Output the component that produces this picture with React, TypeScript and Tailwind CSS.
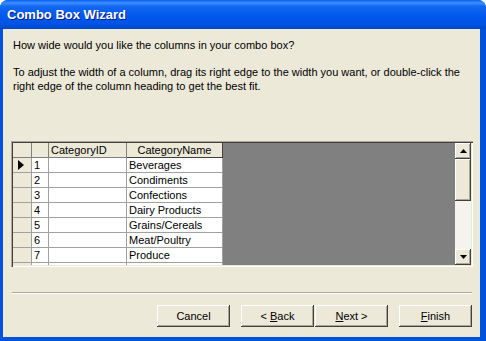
import React from 'react';

const ui = { fontFamily: '"Liberation Sans", Arial, sans-serif' };

const rows = [
  { id: '1', name: 'Beverages' },
  { id: '2', name: 'Condiments' },
  { id: '3', name: 'Confections' },
  { id: '4', name: 'Dairy Products' },
  { id: '5', name: 'Grains/Cereals' },
  { id: '6', name: 'Meat/Poultry' },
  { id: '7', name: 'Produce' },
  { id: '8', name: 'Seafood' },
];

const raised =
  'bg-[#ECE9D8] shadow-[inset_-1px_-1px_#404040,inset_1px_1px_#ffffff,inset_-2px_-2px_#ACA899]';

const WizButton = ({ children, className = '' }: { children: React.ReactNode; className?: string }) => (
  <button className={`w-[73px] h-[22px] flex items-center justify-center text-[11px] text-black ${raised} ${className}`}>
    {children}
  </button>
);

const Triangle = ({ up }: { up?: boolean }) => (
  <svg width="7" height="4" viewBox="0 0 7 4">
    {up ? <polygon points="3.5,0 7,4 0,4" fill="#000" /> : <polygon points="0,0 7,0 3.5,4" fill="#000" />}
  </svg>
);

export default function App() {
  return (
    <div className="w-[486px] h-[341px] flex flex-col rounded-t-[8px] overflow-hidden bg-[#0052DD]" style={ui}>
      {/* title bar */}
      <div className="h-[29px] flex items-center pl-[7px] bg-[linear-gradient(to_bottom,#0A5FEF_0%,#3C8EFF_10%,#1468F0_22%,#0058EE_55%,#0053E1_85%,#0046C4_100%)]">
        <span className="text-white font-bold text-[13px] [text-shadow:1px_1px_#0A1E8C]">Combo Box Wizard</span>
      </div>

      {/* body */}
      <div className="flex-1 ml-[3px] mr-[6px] mb-[4px] bg-[#ECE9D8] flex flex-col text-[11px] text-black">
        <p className="mt-[9px] ml-[10px] leading-[14px]">How wide would you like the columns in your combo box?</p>
        <p className="mt-[13px] ml-[10px] leading-[14px] w-[460px]">
          To adjust the width of a column, drag its right edge to the width you want, or double-click the right edge of the column heading to get the best fit.
        </p>

        {/* datasheet */}
        <div className="mt-[48px] ml-[8px] w-[462px] h-[126px] p-[2px] bg-[#ECE9D8] shadow-[inset_1px_1px_#ACA899,inset_2px_2px_#404040,inset_-1px_-1px_#ffffff,inset_-2px_-2px_#ECE9D8] flex">
          <div className="flex-1 bg-[#808080] overflow-hidden">
            <div className="flex flex-col w-[210px]">
              <div className="flex h-[15px]">
                <div className="w-[19px] bg-[#ECE9D8] border-r border-b border-[#808080]" />
                <div className="w-[17px] bg-[#ECE9D8] border-r border-b border-[#808080]" />
                <div className="w-[78px] bg-[#ECE9D8] border-r border-b border-[#808080] leading-[14px] pl-[2px]">CategoryID</div>
                <div className="w-[96px] bg-[#ECE9D8] border-r border-b border-[#404040] leading-[14px] text-center">CategoryName</div>
              </div>
              {rows.map((r, i) => (
                <div key={r.id} className="flex h-[15px]">
                  <div className="w-[19px] bg-[#ECE9D8] border-r border-b border-[#A0A0A0] flex items-center pl-[5px]">
                    {i === 0 && (
                      <svg width="6" height="10" viewBox="0 0 6 10">
                        <polygon points="0,0 6,5 0,10" fill="#000" />
                      </svg>
                    )}
                  </div>
                  <div className="w-[17px] bg-white border-r border-b border-[#A0A0A0] leading-[14px] pl-[2px]">{r.id}</div>
                  <div className="w-[78px] bg-white border-r border-b border-[#A0A0A0]" />
                  <div className="w-[96px] bg-white border-r border-b border-[#A0A0A0] leading-[14px] pl-[2px]">{r.name}</div>
                </div>
              ))}
            </div>
          </div>

          {/* scrollbar */}
          <div className="w-[16px] flex flex-col bg-[#F4F3EE]">
            <div className={`h-[16px] flex items-center justify-center ${raised}`}>
              <Triangle up />
            </div>
            <div className={`h-[42px] ${raised}`} />
            <div className="flex-1" />
            <div className={`h-[16px] flex items-center justify-center ${raised}`}>
              <Triangle />
            </div>
          </div>
        </div>

        {/* separator */}
        <div className="mt-[25px] ml-[9px] w-[460px] h-[2px] border-t border-[#ACA899] border-b border-b-white" />

        {/* buttons */}
        <div className="mt-[11px] ml-[154px] flex">
          <WizButton>Cancel</WizButton>
          <WizButton className="ml-[11px]">
            &lt; <span className="underline ml-[3px]">B</span>ack
          </WizButton>
          <WizButton className="ml-[1px]">
            <span className="underline">N</span>ext &gt;
          </WizButton>
          <WizButton className="ml-[11px]">
            <span className="underline">F</span>inish
          </WizButton>
        </div>
      </div>
    </div>
  );
}
